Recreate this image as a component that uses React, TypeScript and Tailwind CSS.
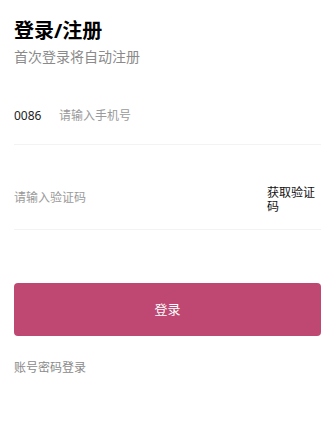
import { useState } from 'react';

export default function App() {
  const [phone, setPhone] = useState('');
  const [code, setCode] = useState('');

  return (
    <main
      className="min-h-screen bg-white px-[14px] pt-[19px]"
      style={{ fontFamily: '"Noto Sans", "Noto Sans CJK SC", sans-serif' }}
    >
      {/* Heading */}
      <h1 className="text-[20px] font-bold leading-[24px] text-black">登录/注册</h1>
      <p className="mt-[4px] text-[14px] leading-[20px] text-[#8a8a8a]">首次登录将自动注册</p>

      {/* Phone row */}
      <div className="mt-[41px] flex items-center border-b border-[#f3f3f3] pb-[20px]">
        <span className="w-[45px] text-[12px] leading-[16px] text-[#222]">0086</span>
        <input
          value={phone}
          onChange={(e) => setPhone(e.target.value)}
          placeholder="请输入手机号"
          className="h-[16px] flex-1 bg-transparent text-[12px] text-[#222] outline-none placeholder:text-[#9a9a9a]"
        />
      </div>

      {/* Code row */}
      <div className="flex items-center border-b border-[#f3f3f3] pb-[15px] pt-[41px]">
        <input
          value={code}
          onChange={(e) => setCode(e.target.value)}
          placeholder="请输入验证码"
          className="mb-[4px] h-[16px] min-w-0 flex-1 bg-transparent text-[12px] text-[#222] outline-none placeholder:text-[#9a9a9a]"
        />
        <button className="w-[54px] text-left text-[12px] leading-[14px] text-[#111]">获取验证码</button>
      </div>

      <button className="mt-[53px] h-[53px] w-full rounded-[4px] bg-[#be4872] text-[13px] text-white">
        登录
      </button>

      <p className="mt-[24px] text-[12px] leading-[16px] text-[#8a8a8a]">账号密码登录</p>
    </main>
  );
}
